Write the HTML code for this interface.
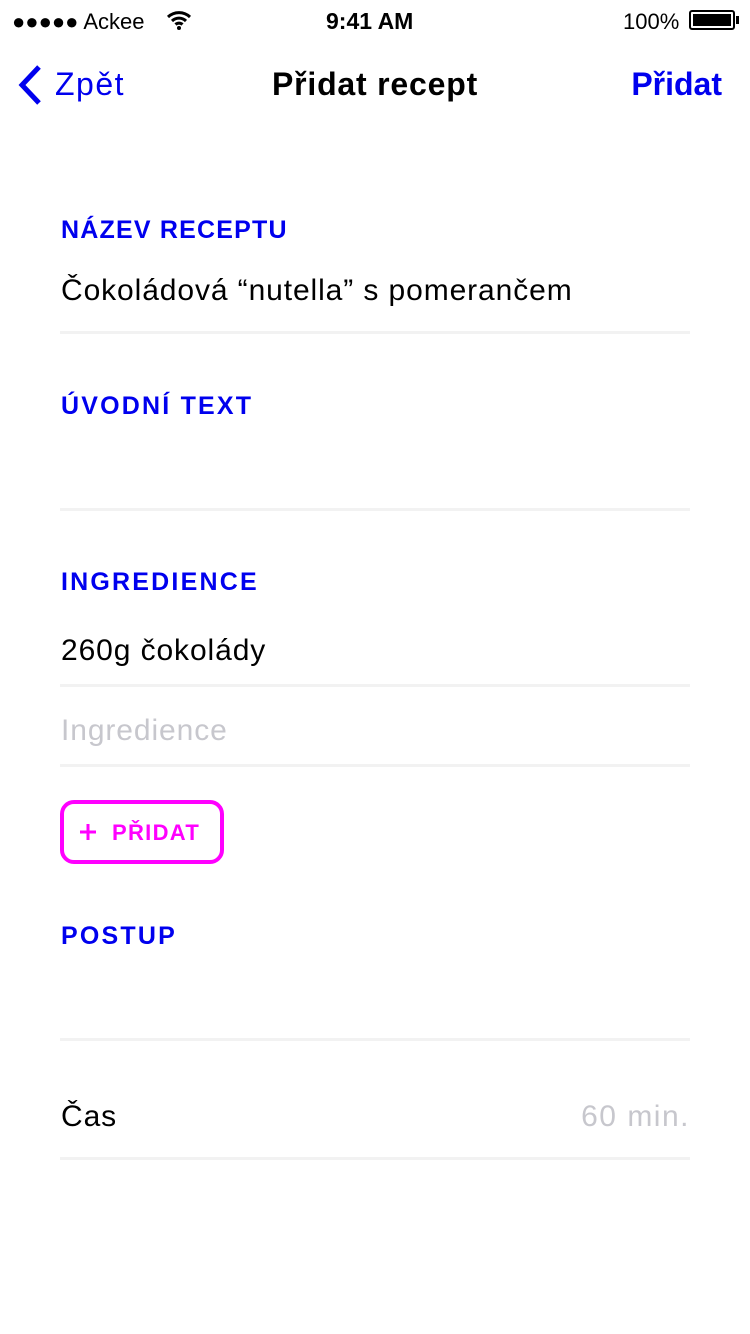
<!DOCTYPE html>
<html><head><meta charset="utf-8"><style>
*{margin:0;padding:0;box-sizing:border-box}
body{width:750px;height:1334px;background:#fff;font-family:"Liberation Sans",sans-serif;position:relative;overflow:hidden;color:#000}
.a{position:absolute;white-space:nowrap}
.lab{color:#0000ee;font-weight:bold;font-size:25px;letter-spacing:2.2px;left:61px}
.val{font-size:30px;left:61px;letter-spacing:0.9px}
.line{position:absolute;left:60px;width:630px;height:3px;background:#f2f2f2}
</style></head><body>
<div class="a" style="left:12px;top:9px;font-size:22px">●●●●● Ackee</div>
<svg class="a" style="left:166px;top:10px" width="26" height="20" viewBox="0 0 26 20"><path d="M2 7a16 16 0 0 1 22 0M6 11a10 10 0 0 1 14 0M9.5 14.5a5 5 0 0 1 7 0" stroke="#000" stroke-width="3" fill="none"/><circle cx="13" cy="18" r="2" fill="#000"/></svg>
<div class="a" style="left:326px;top:8px;font-size:23px;font-weight:bold">9:41 AM</div>
<div class="a" style="left:623px;top:9px;font-size:22px">100%</div>
<div class="a" style="left:689px;top:10px;width:46px;height:20px;border:2px solid #000;border-radius:3px;padding:2px"><div style="background:#000;width:100%;height:100%"></div></div>
<div class="a" style="left:736px;top:16px;width:3px;height:8px;background:#000"></div>
<svg class="a" style="left:16px;top:64px" width="28" height="42" viewBox="0 0 28 42"><path d="M23 3L6 21l17 18" stroke="#0000ee" stroke-width="5" fill="none"/></svg>
<div class="a" style="left:55px;top:66px;font-size:32px;color:#0000ee;letter-spacing:1.5px">Zpět</div>
<div class="a" style="left:272px;top:66px;font-size:32px;font-weight:bold;letter-spacing:0.8px">Přidat recept</div>
<div class="a" style="right:28px;top:66px;font-size:32px;font-weight:bold;color:#0000ee">Přidat</div>
<div class="a lab" style="top:216px;letter-spacing:1.2px">NÁZEV RECEPTU</div>
<div class="a val" style="top:274px">Čokoládová “nutella” s pomerančem</div>
<div class="line" style="top:331px"></div>
<div class="a lab" style="top:392px">ÚVODNÍ TEXT</div>
<div class="line" style="top:508px"></div>
<div class="a lab" style="top:568px">INGREDIENCE</div>
<div class="a val" style="top:634px">260g čokolády</div>
<div class="line" style="top:684px"></div>
<div class="a val" style="top:714px;color:#c7c7cd">Ingredience</div>
<div class="line" style="top:764px"></div>
<div class="a" style="left:60px;top:800px;width:164px;height:64px;border:4px solid #ff00ff;border-radius:14px"></div>
<svg class="a" style="left:79px;top:823px" width="18" height="18" viewBox="0 0 18 18"><path d="M9 1v16M1 9h16" stroke="#ff00ff" stroke-width="3"/></svg>
<div class="a" style="left:112px;top:820px;color:#ff00ff;font-weight:bold;font-size:22px;letter-spacing:1.3px">PŘIDAT</div>
<div class="a lab" style="top:922px">POSTUP</div>
<div class="line" style="top:1038px"></div>
<div class="a val" style="top:1100px">Čas</div>
<div class="a" style="right:60px;top:1100px;font-size:30px;color:#c7c7cd;letter-spacing:1.5px">60 min.</div>
<div class="line" style="top:1157px"></div>
</body></html>
